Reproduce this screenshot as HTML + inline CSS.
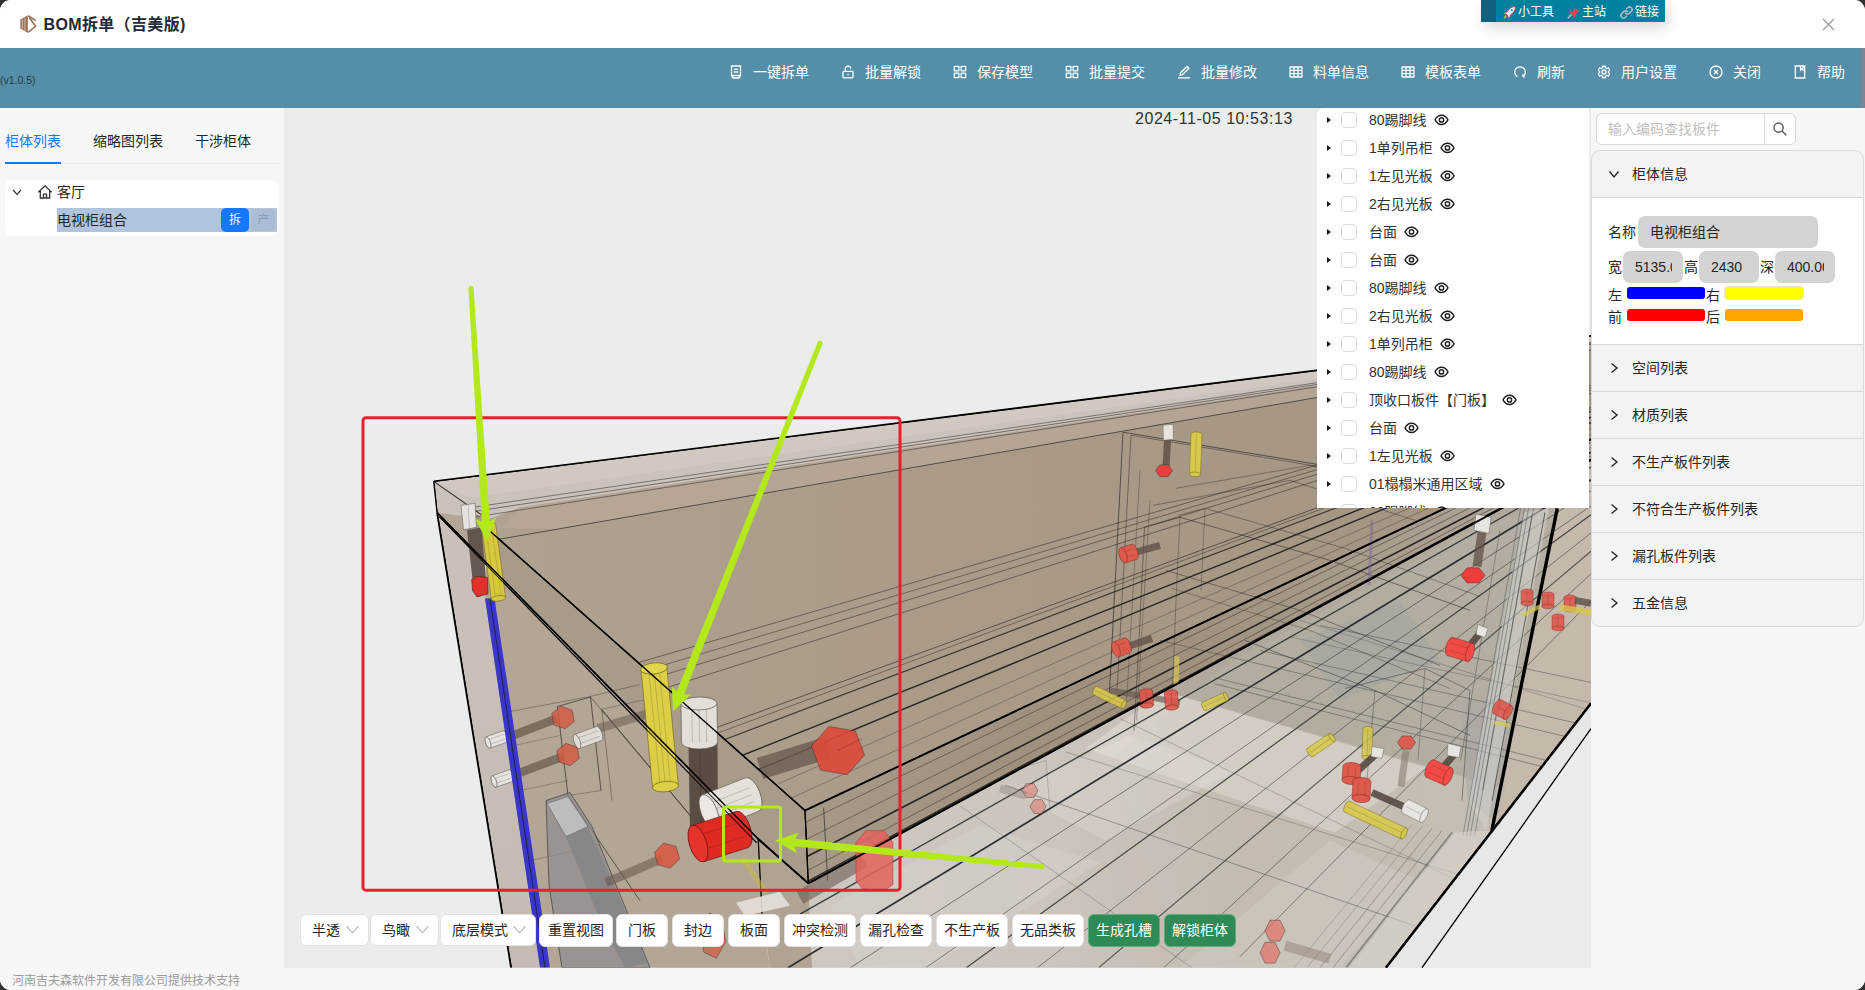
<!DOCTYPE html>
<html lang="zh-CN">
<head>
<meta charset="utf-8">
<title>BOM拆单（吉美版)</title>
<style>
*{box-sizing:border-box;margin:0;padding:0}
html,body{width:1865px;height:990px;overflow:hidden;background:#323232}
body{font-family:"Liberation Sans","Noto Sans CJK SC",sans-serif;font-size:14px;color:#262626;position:relative}
#win{position:absolute;left:0;top:0;width:1865px;height:990px;background:#f6f8f8;border-radius:11px;overflow:hidden}
.abs{position:absolute}
/* title bar */
#title{position:absolute;left:0;top:0;width:1865px;height:48px;background:#fff}
#title .t{position:absolute;left:43.5px;top:13px;letter-spacing:.35px;font-size:16px;font-weight:bold;color:#1f2937;line-height:24px;white-space:nowrap}
#float{position:absolute;left:1481px;top:0;width:184px;height:22px;background:#00809f;color:#fff;font-size:12px;line-height:21px;white-space:nowrap;box-shadow:3px 6px 14px rgba(0,0,0,.15)}
#float .strip{position:absolute;left:0;top:0;width:15px;height:22px;background:#12607f}
#float span{position:absolute;top:2px}
/* header */
#hdr{position:absolute;left:0;top:48px;width:1865px;height:60px;background:#548ea8}
#hdr .ver{position:absolute;left:0;top:26px;font-size:10.5px;color:#2a3b45;line-height:12px}
#hdr .sb{position:absolute;left:1861px;top:0;width:4px;height:61px;background:#7b8495}
.mi{position:absolute;top:14px;height:20px;line-height:20px;color:#fff;font-size:14px;white-space:nowrap}
.mi svg{position:absolute;left:0;top:3px;width:14px;height:14px;fill:none;stroke:#fff;stroke-width:1.3}
.mi b{font-weight:normal;position:absolute;left:24px;top:0}
/* left */
#left{position:absolute;left:0;top:108px;width:285px;height:860px;background:#f6f8f8}
.tab{position:absolute;top:22px;line-height:22px;font-size:14px;color:#262626;white-space:nowrap}
#tree{position:absolute;left:5px;top:72px;width:274px;height:56px;background:#fff;border-radius:7px}
/* viewport */
#vp{position:absolute;left:285px;top:108px;width:1306px;height:860px;background:#ebeded;overflow:hidden}
#ts{position:absolute;left:850px;top:0;font-size:16px;letter-spacing:.55px;line-height:21px;color:#333;white-space:nowrap}
/* list panel */
#lst{position:absolute;left:1032px;top:0;width:272px;height:400px;background:#fff;overflow:hidden;border-radius:7px 0 0 0}
.row{position:absolute;left:0;width:272px;height:28px;line-height:28px;font-size:14px;color:#333;white-space:nowrap}
.row i{position:absolute;left:10px;top:10.500px;width:0;height:0;border-left:4.500px solid #1a1a1a;border-top:3.700px solid transparent;border-bottom:3.700px solid transparent}
.row u{position:absolute;left:24px;top:6px;width:16px;height:16px;border:1px solid #d9d9d9;border-radius:4px;background:#fff}
.row s{position:absolute;left:52px;top:0;text-decoration:none}
.row s svg{display:inline-block;vertical-align:-2px;margin-left:7px;width:15px;height:15px}
/* toolbar */
.tb{position:absolute;top:806px;height:33px;line-height:31px;background:#fff;border:1px solid #e2e2e2;border-radius:6px;font-size:14px;color:#262626;text-align:center;white-space:nowrap}
.tb.g{background:#2e8b57;border-color:#5fae80;color:#fff}
.tb.sel{text-align:left;padding-left:11px;top:806px;height:32px;line-height:30px}
.tb.sel svg{position:absolute;right:9px;top:8px;width:13px;height:13px;fill:none;stroke:#bdbdbd;stroke-width:1.1}
/* right */
#right{position:absolute;left:1591px;top:108px;width:274px;height:860px;background:#f6f8f8}
#search{position:absolute;left:5px;top:5px;width:200px;height:32px;border:1px solid #d9d9d9;border-radius:6px;background:#fff}
#search .ph{position:absolute;left:11px;top:0;line-height:30px;color:#bfbfbf;font-size:14px;white-space:nowrap}
#search .btn{position:absolute;left:167px;top:0;width:1px;height:30px;background:#d9d9d9}
#col{position:absolute;left:0px;top:42px;width:273px;height:477px;border:1px solid #d9d9d9;border-radius:9px;background:#f2f4f4;overflow:hidden}
.ch{position:absolute;left:0;width:275px;height:47px;border-top:1px solid #d9d9d9;line-height:46px;font-size:14px;color:#262626}
.ch svg{position:absolute;left:16px;top:17px;width:12px;height:12px;fill:none;stroke:#262626;stroke-width:1.4}
.ch span{position:absolute;left:40px;top:0;white-space:nowrap}
#cc{position:absolute;left:0;top:46px;width:275px;height:147px;background:#fff;border-top:1px solid #d9d9d9}
.lb{position:absolute;font-size:14px;line-height:20px;color:#262626;white-space:nowrap}
.in{position:absolute;height:32px;border-radius:7px;background:#d3d3d3;line-height:32px;font-size:14px;color:#262626;padding:0 11px 0 12px;white-space:nowrap}
.in em{display:block;font-style:normal;overflow:hidden;width:100%;height:32px}
.bar{position:absolute;width:78px;height:12px;border-radius:3px}
#cc .lb,#cc .in,#cc .bar{transform:translate(1px,1px)}
/* footer */
#foot{position:absolute;left:0;top:968px;width:1865px;height:22px;background:#f7f7f7}
#foot span{position:absolute;left:12px;top:4.5px;font-size:12px;line-height:16px;color:#9a9a9a;white-space:nowrap}
</style>
</head>
<body>
<div id="win">

<div id="title">
  <svg class="abs" style="left:20px;top:15px" width="17" height="19" viewBox="0 0 17 19"><polygon points="7.900,0.200 0.300,4.400 0.300,13.600 7.900,17.900" fill="#a0765a"/><path d="M2.300 4.500V14.500M4.900 3V16" stroke="#cdb5a4" stroke-width="1" fill="none"/><path d="M8.200 0.800L15.800 5.400M9.200 2.500L15.600 11.300L8.200 17.200" stroke="#a0765a" stroke-width="1.700" fill="none" stroke-linejoin="bevel"/></svg>
  <div class="t">BOM拆单（吉美版)</div>
  <svg class="abs" style="left:1822px;top:18px" width="13" height="13" viewBox="0 0 13 13"><path d="M1 1L12 12M12 1L1 12" stroke="#999" stroke-width="1.15" fill="none"/></svg>
  <div id="float"><div class="strip"></div>
    <svg class="abs" style="left:22px;top:6px" width="13" height="13" viewBox="0 0 13 13"><path d="M12.5 .5C9 .5 6 2.5 4 6L2 6.5 1 8l2.5.3L5 10l.3 2.2L7 11l.3-2C10.5 7 12.5 4 12.5 .5Z" fill="#f4f4f6" stroke="#e6405c" stroke-width=".9"/><circle cx="8.8" cy="4.2" r="1.2" fill="#4aa3d8"/><path d="M3.3 9.7L1 12" stroke="#ffb02e" stroke-width="1.6"/></svg>
    <span style="left:37px">小工具</span>
    <svg class="abs" style="left:86px;top:6px" width="13" height="13" viewBox="0 0 13 13"><path d="M7.5 .8l4.7 4.7-1.4.6-2 2 .2 2.6-1.2 1.1L2.2 6.2l1.1-1.2 2.6.2 2-2z" fill="#e8404e"/><path d="M4.6 8.4L.8 12.2" stroke="#c9c9d2" stroke-width="1.3"/></svg>
    <span style="left:101px">主站</span>
    <svg class="abs" style="left:139px;top:6px" width="13" height="13" viewBox="0 0 13 13"><g fill="none" stroke="#aeb6c2" stroke-width="1.6" stroke-linecap="round"><path d="M5.6 7.4a2.6 2.6 0 0 0 3.7 0l2-2a2.6 2.6 0 0 0-3.7-3.7l-1 1"/><path d="M7.4 5.6a2.6 2.6 0 0 0-3.7 0l-2 2a2.6 2.6 0 0 0 3.7 3.7l1-1"/></g></svg>
    <span style="left:154px">链接</span>
  </div>
</div>

<div id="hdr">
  <div class="ver">(v1.0.5)</div>
  <div class="mi" style="left:729px"><svg viewBox="0 0 14 14"><path d="M2.5 1h9v9.5l-1.5 2.5h-6l-1.5-2.5zM2.5 10.5h9M4.8 4.3h4.4M4.8 7h4.4"/></svg><b>一键拆单</b></div>
  <div class="mi" style="left:841px"><svg viewBox="0 0 14 14"><rect x="2" y="6.3" width="10" height="6.5" rx=".8"/><path d="M4.3 6.3V3.8a2.7 2.7 0 0 1 5.4 0M7 8.8v1.6"/></svg><b>批量解锁</b></div>
  <div class="mi" style="left:953px"><svg viewBox="0 0 14 14"><rect x="1.3" y="1.3" width="4.6" height="4.6" rx=".6"/><rect x="8.1" y="1.3" width="4.6" height="4.6" rx=".6"/><rect x="1.3" y="8.1" width="4.6" height="4.6" rx=".6"/><rect x="8.1" y="8.1" width="4.6" height="4.6" rx=".6"/></svg><b>保存模型</b></div>
  <div class="mi" style="left:1065px"><svg viewBox="0 0 14 14"><rect x="1.3" y="1.3" width="4.6" height="4.6" rx=".6"/><rect x="8.1" y="1.3" width="4.6" height="4.6" rx=".6"/><rect x="1.3" y="8.1" width="4.6" height="4.6" rx=".6"/><rect x="8.1" y="8.1" width="4.6" height="4.6" rx=".6"/></svg><b>批量提交</b></div>
  <div class="mi" style="left:1177px"><svg viewBox="0 0 14 14"><path d="M3 10.2l.6-2.5L10 1.4l1.9 1.9-6.4 6.4zM1 12.9h12"/></svg><b>批量修改</b></div>
  <div class="mi" style="left:1289px"><svg viewBox="0 0 14 14"><rect x="1" y="2" width="12" height="10" rx=".6"/><path d="M1 5.3h12M1 8.7h12M5 2v10M9 2v10"/></svg><b>料单信息</b></div>
  <div class="mi" style="left:1401px"><svg viewBox="0 0 14 14"><rect x="1" y="2" width="12" height="10" rx=".6"/><path d="M1 5.3h12M1 8.7h12M5 2v10M9 2v10"/></svg><b>模板表单</b></div>
  <div class="mi" style="left:1513px"><svg viewBox="0 0 14 14"><path d="M4.2 11.6A5.3 5.3 0 1 1 9.8 11.6M9.8 11.6l.3-2.2M9.8 11.6l2 .6"/></svg><b>刷新</b></div>
  <div class="mi" style="left:1597px"><svg viewBox="0 0 14 14"><circle cx="7" cy="7" r="2"/><path d="M5.8 1.2h2.4l.4 1.7 1.3.7 1.6-.6 1.2 2.1-1.2 1.2v1.4l1.2 1.2-1.2 2.1-1.6-.6-1.3.7-.4 1.7H5.8l-.4-1.7-1.3-.7-1.6.6-1.2-2.1L2.5 7.7V6.3L1.300 5.100l1.200-2.100 1.600.6 1.300-.7z"/></svg><b>用户设置</b></div>
  <div class="mi" style="left:1709px"><svg viewBox="0 0 14 14"><circle cx="7" cy="7" r="6"/><path d="M5 5l4 4M9 5l-4 4"/></svg><b>关闭</b></div>
  <div class="mi" style="left:1793px"><svg viewBox="0 0 14 14"><path d="M2.3 1h9.4v12H2.300zM7.600 1v4l1.200-1 1.200 1V1"/></svg><b>帮助</b></div>
  <div class="sb"></div>
</div>

<div id="left">
  <div class="tab" style="left:5px;color:#1677ff">柜体列表</div>
  <div class="tab" style="left:93px">缩略图列表</div>
  <div class="tab" style="left:195px">干涉柜体</div>
  <div class="abs" style="left:5px;top:55px;width:274px;height:1px;background:#e9ebeb"></div>
  <div class="abs" style="left:5px;top:54px;width:56px;height:2px;background:#1677ff"></div>
  <div id="tree">
    <svg class="abs" style="left:7px;top:7px" width="10" height="10" viewBox="0 0 10 10"><path d="M1 3l4 4.300 4-4.300" fill="none" stroke="#333" stroke-width="1.2"/></svg>
    <svg class="abs" style="left:32px;top:4px" width="16" height="16" viewBox="0 0 16 16"><path d="M1.300 8.200L8 1.800l6.700 6.400M3.300 7v7h9.400V7M6.500 14v-3.800h3V14" fill="none" stroke="#333" stroke-width="1.3"/></svg>
    <div class="abs" style="left:52px;top:1px;line-height:22px;font-size:14px;color:#262626">客厅</div>
    <div class="abs" style="left:52px;top:28px;width:220px;height:24px;background:#b0c4de"></div>
    <div class="abs" style="left:52px;top:29px;line-height:22px;font-size:14px;color:#262626">电视柜组合</div>
    <div class="abs" style="left:216px;top:28px;width:28px;height:24px;border-radius:5px;background:#1677ff;color:#fff;font-size:12px;line-height:24px;text-align:center">拆</div>
    <div class="abs" style="left:245px;top:28px;width:27px;height:24px;border-radius:5px;background:#abbdd6;border:1px solid #b9c6d8;color:#8b9cb5;font-size:12px;line-height:22px;text-align:center">产</div>
  </div>
</div>

<div class="abs" style="left:284px;top:108px;width:1px;height:860px;background:#ebeded"></div>
<div id="vp">
<!--SCENE-->
<svg class="abs" style="left:0;top:0" width="1306" height="860" preserveAspectRatio="none" viewBox="285 108 1306 859.300">
<defs>
<linearGradient id="gTop" x1="488" y1="0" x2="1591" y2="0" gradientUnits="userSpaceOnUse"><stop offset="0" stop-color="#b0a290"/><stop offset=".35" stop-color="#ab9c8a"/><stop offset="1" stop-color="#a39381"/></linearGradient>
<linearGradient id="gFloor" x1="820" y1="0" x2="1591" y2="0" gradientUnits="userSpaceOnUse"><stop offset="0" stop-color="#cfc8c1"/><stop offset=".3" stop-color="#ccc5bd"/><stop offset=".55" stop-color="#c3baad"/><stop offset="1" stop-color="#c6bdb0"/></linearGradient>
<linearGradient id="gLeft" x1="440" y1="500" x2="540" y2="967" gradientUnits="userSpaceOnUse"><stop offset="0" stop-color="#cac2ba"/><stop offset="1" stop-color="#c4bbb3"/></linearGradient>
<linearGradient id="gBand" x1="805" y1="0" x2="1591" y2="0" gradientUnits="userSpaceOnUse"><stop offset="0" stop-color="#a79988"/><stop offset=".28" stop-color="#a0917f"/><stop offset=".5" stop-color="#a0917f"/><stop offset=".72" stop-color="#a89c8d"/><stop offset="1" stop-color="#b0a598"/></linearGradient>
</defs>
<polygon points="433.7,481.0 488.0,519.0 485.0,600.0 532.0,913.0 540.0,967.0 511.0,967.0 437.0,512.3" fill="url(#gLeft)"/>
<polygon points="437.0,512.3 758.2,838.4 762.0,913.0 770.0,967.0 540.0,967.0 532.0,913.0 485.0,600.0 488.0,519.0" fill="#b3a697"/>
<polygon points="470.0,545.8 470.0,512.0 488.0,519.0 487.9,529.0 805.0,810.0 808.3,882.8 758.2,838.4" fill="#a99b8a"/>
<polygon points="433.7,481.0 1591.0,335.6 1591.0,343.6 520.0,507.0 488.0,519.0" fill="#cbc3b9"/>
<polygon points="488.0,519.0 520.0,507.0 1591.0,343.6 1591.0,439.1 805.0,810.0 487.9,529.0" fill="url(#gTop)"/>
<polygon points="520.0,507.0 1591.0,343.6 1591.0,349.8 560.0,528.4 500.0,528.0" fill="#b6a898" fill-opacity="0.8"/>
<polygon points="433.7,481.0 1591.0,335.6 1591.0,340.0 470.0,497.4" fill="#d3ccc4" fill-opacity="0.7"/>
<polygon points="805.0,810.0 1591.0,439.1 1591.0,459.6 808.3,882.8" fill="url(#gBand)"/>
<polygon points="808.3,882.8 1591.0,459.6 1591.0,703.0 1386.0,967.0 770.0,967.0 762.0,913.0 758.2,838.4" fill="url(#gFloor)"/>
<polygon points="1591.0,703.0 1591.0,728.0 1422.0,967.0 1386.0,967.0" fill="#e7e7e6"/>
<polygon points="758.2,838.4 808.3,882.8 812.0,967.0 770.0,967.0 762.0,913.0" fill="#b0a394"/>
<polygon points="830.0,905.0 980.0,825.0 1100.0,862.0 930.0,967.0 860.0,967.0" fill="#d6d0ca" fill-opacity="0.55"/>
<polygon points="1010.0,790.0 1130.0,735.0 1235.0,770.0 1105.0,840.0" fill="#d9d3cd" fill-opacity="0.5"/>
<polygon points="1180.0,967.0 1330.0,840.0 1420.0,880.0 1340.0,967.0" fill="#d2cbc4" fill-opacity="0.5"/>
<polygon points="1163.7,690.7 1543.0,485.6 1557.3,508.0 1500.5,787.0" fill="#7f786d" fill-opacity="0.28"/>
<polygon points="1163.7,690.7 1426.0,767.0 1335.0,832.0 1085.0,748.0" fill="#ece8e3" fill-opacity="0.42"/>
<polygon points="1230.0,662.0 1490.0,520.0 1557.0,508.0 1491.0,830.0 1386.0,967.0 1180.0,967.0 1110.0,760.0" fill="#c9c6c2" fill-opacity="0.15"/>
<polygon points="1300.0,640.0 1400.0,600.0 1440.0,660.0 1340.0,700.0" fill="#9aa0a4" fill-opacity="0.35"/>
<polygon points="1462.0,700.0 1517.0,700.0 1500.0,825.0 1467.0,800.0" fill="#a9a8a6" fill-opacity="0.55"/>
<polygon points="1557.3,508.0 1591.0,470.0 1591.0,703.0 1491.7,830.5" fill="#c3b8a9" fill-opacity="0.75"/>
<clipPath id="cab"><polygon points="433.7,481.0 1591.0,335.6 1591.0,703.0 1386.0,967.0 511.0,967.0 437.0,512.3"/></clipPath><g clip-path="url(#cab)">
<line x1="464.5" y1="508.2" x2="1591.0" y2="342.1" stroke="#1c1c1c" stroke-width="0.8" stroke-opacity="0.6"/>
<line x1="468.6" y1="511.9" x2="1591.0" y2="343.0" stroke="#1c1c1c" stroke-width="0.8" stroke-opacity="0.65"/>
<line x1="474.1" y1="516.8" x2="1591.0" y2="344.2" stroke="#1c1c1c" stroke-width="0.8" stroke-opacity="0.6"/>
<line x1="499.1" y1="538.9" x2="1591.0" y2="349.8" stroke="#1c1c1c" stroke-width="0.9" stroke-opacity="0.7"/>
<line x1="638.2" y1="662.2" x2="1591.0" y2="385.0" stroke="#1c1c1c" stroke-width="0.8" stroke-opacity="0.6"/>
<line x1="646.7" y1="669.7" x2="1591.0" y2="387.4" stroke="#1c1c1c" stroke-width="0.8" stroke-opacity="0.55"/>
<line x1="655.1" y1="677.2" x2="1591.0" y2="389.8" stroke="#1c1c1c" stroke-width="0.8" stroke-opacity="0.6"/>
<line x1="666.5" y1="687.3" x2="1591.0" y2="393.1" stroke="#1c1c1c" stroke-width="0.8" stroke-opacity="0.6"/>
<line x1="712.9" y1="728.4" x2="1591.0" y2="407.3" stroke="#1c1c1c" stroke-width="0.9" stroke-opacity="0.65"/>
<line x1="717.7" y1="732.6" x2="1591.0" y2="408.8" stroke="#1c1c1c" stroke-width="0.8" stroke-opacity="0.55"/>
<line x1="724.8" y1="738.9" x2="1591.0" y2="411.1" stroke="#1c1c1c" stroke-width="1.1" stroke-opacity="0.8"/>
<line x1="742.6" y1="754.7" x2="1591.0" y2="417.0" stroke="#1c1c1c" stroke-width="1.4" stroke-opacity="0.9"/>
<line x1="758.6" y1="768.9" x2="1591.0" y2="422.4" stroke="#1c1c1c" stroke-width="1.4" stroke-opacity="0.9"/>
<line x1="775.9" y1="784.2" x2="1591.0" y2="428.5" stroke="#1c1c1c" stroke-width="0.7" stroke-opacity="0.45"/>
<line x1="791.0" y1="797.6" x2="1591.0" y2="433.9" stroke="#1c1c1c" stroke-width="0.7" stroke-opacity="0.45"/>
<line x1="805.5" y1="821.6" x2="1591.0" y2="442.4" stroke="#1c1c1c" stroke-width="0.8" stroke-opacity="0.55"/>
<line x1="806.3" y1="838.8" x2="1591.0" y2="447.2" stroke="#1c1c1c" stroke-width="0.8" stroke-opacity="0.55"/>
<line x1="807.1" y1="855.9" x2="1591.0" y2="452.0" stroke="#1c1c1c" stroke-width="1.6" stroke-opacity="0.95"/>
<line x1="807.7" y1="869.8" x2="1591.0" y2="456.0" stroke="#1c1c1c" stroke-width="0.8" stroke-opacity="0.55"/>
<line x1="808.2" y1="880.4" x2="1591.0" y2="459.0" stroke="#1c1c1c" stroke-width="1.4" stroke-opacity="0.9"/>
<line x1="800.0" y1="913.5" x2="1591.0" y2="466.8" stroke="#20262a" stroke-width="1.3" stroke-opacity="0.85"/>
<line x1="788.0" y1="967.0" x2="1591.0" y2="479.5" stroke="#20262a" stroke-width="1.7" stroke-opacity="0.95"/>
<line x1="850.3" y1="967.0" x2="1591.0" y2="490.4" stroke="#20262a" stroke-width="0.9" stroke-opacity="0.6"/>
<line x1="925.9" y1="967.0" x2="1591.0" y2="505.5" stroke="#20262a" stroke-width="0.9" stroke-opacity="0.55"/>
<line x1="966.3" y1="967.0" x2="1591.0" y2="514.5" stroke="#20262a" stroke-width="1.2" stroke-opacity="0.8"/>
<line x1="1037.6" y1="967.0" x2="1591.0" y2="532.7" stroke="#20262a" stroke-width="0.9" stroke-opacity="0.55"/>
<line x1="1098.7" y1="967.0" x2="1591.0" y2="550.8" stroke="#20262a" stroke-width="1.1" stroke-opacity="0.7"/>
<line x1="1163.8" y1="967.0" x2="1591.0" y2="573.4" stroke="#20262a" stroke-width="0.9" stroke-opacity="0.55"/>
<line x1="1240.0" y1="955.9" x2="1591.0" y2="600.6" stroke="#20262a" stroke-width="0.9" stroke-opacity="0.55"/>
<line x1="960.0" y1="805.3" x2="1191.7" y2="967.0" stroke="#3a3f42" stroke-width="0.7" stroke-opacity="0.4"/>
<line x1="1120.0" y1="718.0" x2="1591.0" y2="943.9" stroke="#3a3f42" stroke-width="0.7" stroke-opacity="0.4"/>
<line x1="1300.0" y1="619.8" x2="1591.0" y2="710.2" stroke="#3a3f42" stroke-width="0.7" stroke-opacity="0.4"/>
<line x1="1004.8" y1="784.6" x2="1591.0" y2="985.6" stroke="#30373b" stroke-width="0.8" stroke-opacity="0.5"/>
<line x1="1066.0" y1="751.5" x2="1591.0" y2="915.4" stroke="#30373b" stroke-width="0.7" stroke-opacity="0.4"/>
<line x1="1214.5" y1="677.2" x2="1591.0" y2="771.0" stroke="#30373b" stroke-width="0.8" stroke-opacity="0.5"/>
<line x1="1290.0" y1="636.4" x2="1591.0" y2="702.4" stroke="#30373b" stroke-width="0.7" stroke-opacity="0.4"/>
<line x1="1214.5" y1="683.3" x2="1591.0" y2="778.3" stroke="#30373b" stroke-width="0.8" stroke-opacity="0.5"/>
<line x1="1160.0" y1="640.0" x2="1591.0" y2="742.0" stroke="#30373b" stroke-width="0.8" stroke-opacity="0.5"/>
<line x1="1260.0" y1="650.0" x2="1591.0" y2="726.0" stroke="#30373b" stroke-width="0.8" stroke-opacity="0.5"/>
<line x1="1320.0" y1="625.0" x2="1591.0" y2="682.0" stroke="#30373b" stroke-width="0.8" stroke-opacity="0.5"/>
<line x1="1123.0" y1="432.0" x2="1480.8" y2="491.1" stroke="#222" stroke-width="0.9" stroke-opacity="0.7"/>
<line x1="1131.0" y1="435.0" x2="1477.2" y2="492.8" stroke="#222" stroke-width="0.8" stroke-opacity="0.55"/>
<line x1="1123.0" y1="432.0" x2="1109.0" y2="700.0" stroke="#222" stroke-width="0.9" stroke-opacity="0.7"/>
<line x1="1131.0" y1="435.0" x2="1117.1" y2="690.0" stroke="#222" stroke-width="0.8" stroke-opacity="0.55"/>
<line x1="1140.0" y1="470.0" x2="1126.7" y2="700.0" stroke="#222" stroke-width="0.7" stroke-opacity="0.45"/>
<line x1="1150.0" y1="500.0" x2="1136.5" y2="720.0" stroke="#222" stroke-width="0.7" stroke-opacity="0.45"/>
<polyline points="1153.0,505.0 1290.0,480.0 1415.0,520.0" fill="none" stroke="#222" stroke-width="0.8" stroke-opacity="0.5" stroke-linejoin="round"/>
<polyline points="1176.0,488.0 1310.0,465.0 1420.0,500.0" fill="none" stroke="#222" stroke-width="0.8" stroke-opacity="0.45" stroke-linejoin="round"/>
<polyline points="1144.5,527.0 1180.0,517.0 1330.0,560.0 1470.0,610.0" fill="none" stroke="#2a2622" stroke-width="0.9" stroke-opacity="0.6" stroke-linejoin="round"/>
<polyline points="1144.5,527.0 1139.0,640.0 1134.0,730.0" fill="none" stroke="#2a2622" stroke-width="0.9" stroke-opacity="0.55" stroke-linejoin="round"/>
<polyline points="1180.0,517.0 1176.0,600.0 1172.0,700.0" fill="none" stroke="#2a2622" stroke-width="0.8" stroke-opacity="0.45" stroke-linejoin="round"/>
<polyline points="1178.0,515.0 1205.0,508.0 1345.0,548.0 1480.0,596.0" fill="none" stroke="#2a2622" stroke-width="0.8" stroke-opacity="0.5" stroke-linejoin="round"/>
<polyline points="1205.0,508.0 1201.0,590.0" fill="none" stroke="#2a2622" stroke-width="0.8" stroke-opacity="0.4" stroke-linejoin="round"/>
<polyline points="1166.0,570.0 1300.0,610.0 1440.0,665.0" fill="none" stroke="#2a2622" stroke-width="0.9" stroke-opacity="0.5" stroke-linejoin="round"/>
<polyline points="1172.0,588.0 1310.0,630.0 1450.0,688.0" fill="none" stroke="#2a2622" stroke-width="0.8" stroke-opacity="0.45" stroke-linejoin="round"/>
<polyline points="1245.0,640.0 1375.0,690.0 1470.0,735.0" fill="none" stroke="#30373b" stroke-width="0.9" stroke-opacity="0.6" stroke-linejoin="round"/>
<polyline points="1375.0,690.0 1366.0,790.0" fill="none" stroke="#30373b" stroke-width="0.8" stroke-opacity="0.5" stroke-linejoin="round"/>
<polyline points="1345.0,688.0 1425.0,668.0 1470.0,690.0 1462.0,800.0" fill="none" stroke="#30373b" stroke-width="0.9" stroke-opacity="0.55" stroke-linejoin="round"/>
<polyline points="1425.0,668.0 1418.0,760.0" fill="none" stroke="#30373b" stroke-width="0.8" stroke-opacity="0.45" stroke-linejoin="round"/>
<polygon points="1524.0,512.0 1549.0,508.0 1486.0,830.0 1468.0,800.0" fill="#d6d3cf" fill-opacity="0.55"/>
<line x1="1522.0" y1="500.0" x2="1463.0" y2="835.0" stroke="#5f686c" stroke-width="1.1" stroke-opacity="0.55"/>
<line x1="1526.0" y1="500.0" x2="1466.6" y2="835.0" stroke="#5f686c" stroke-width="1.1" stroke-opacity="0.6"/>
<line x1="1530.0" y1="500.0" x2="1470.2" y2="835.0" stroke="#5f686c" stroke-width="1.1" stroke-opacity="0.55"/>
<line x1="1535.0" y1="500.0" x2="1474.7" y2="835.0" stroke="#5f686c" stroke-width="1.1" stroke-opacity="0.5"/>
<line x1="1557.3" y1="508.0" x2="1491.7" y2="830.5" stroke="#000" stroke-width="3.4"/>
<line x1="1545.0" y1="512.0" x2="1492.1" y2="800.0" stroke="#222" stroke-width="1" stroke-opacity="0.6"/>
<line x1="1532.0" y1="515.0" x2="1482.5" y2="790.0" stroke="#333" stroke-width="0.9" stroke-opacity="0.5"/>
<line x1="1500.0" y1="530.0" x2="1460.7" y2="760.0" stroke="#333" stroke-width="0.8" stroke-opacity="0.45"/>
<line x1="1452.0" y1="832.0" x2="1346.0" y2="967.0" stroke="#555b5e" stroke-width="1.6" stroke-opacity="0.6"/>
<line x1="1442.0" y1="830.0" x2="1333.0" y2="967.0" stroke="#555b5e" stroke-width="0.9" stroke-opacity="0.5"/>
<line x1="1432.0" y1="828.0" x2="1320.0" y2="967.0" stroke="#555b5e" stroke-width="0.9" stroke-opacity="0.5"/>
<line x1="1422.0" y1="826.0" x2="1307.0" y2="967.0" stroke="#555b5e" stroke-width="0.8" stroke-opacity="0.4"/>
<line x1="1412.0" y1="824.0" x2="1294.0" y2="967.0" stroke="#555b5e" stroke-width="0.8" stroke-opacity="0.35"/>
<polygon points="1491.0,830.0 1455.0,832.0 1349.0,967.0 1386.0,967.0" fill="#d9d4ce" fill-opacity="0.6"/>
<line x1="433.7" y1="481.0" x2="1591.0" y2="335.6" stroke="#000" stroke-width="1.6"/>
<line x1="805.0" y1="810.0" x2="1591.0" y2="439.1" stroke="#000" stroke-width="1.7" stroke-opacity="0.95"/>
<line x1="808.3" y1="882.8" x2="1591.0" y2="459.6" stroke="#000" stroke-width="1.9" stroke-opacity="0.95"/>
<line x1="433.7" y1="481.0" x2="437.0" y2="512.3" stroke="#000" stroke-width="1.3"/>
<line x1="433.7" y1="481.0" x2="488.0" y2="519.0" stroke="#000" stroke-width="1" stroke-opacity="0.8"/>
<line x1="437.0" y1="512.3" x2="511.0" y2="967.0" stroke="#000" stroke-width="1.7"/>
<polyline points="437.0,512.3 758.2,838.4" fill="none" stroke="#000" stroke-width="1.5" stroke-linejoin="round"/>
<line x1="439.5" y1="516.5" x2="756.5" y2="842.0" stroke="#000" stroke-width="1" stroke-opacity="0.85"/>
<polyline points="487.9,529.0 805.0,810.0" fill="none" stroke="#000" stroke-width="1.4" stroke-linejoin="round"/>
<line x1="805.0" y1="810.0" x2="808.3" y2="882.8" stroke="#000" stroke-width="1.2"/>
<line x1="758.2" y1="838.4" x2="808.3" y2="882.8" stroke="#000" stroke-width="1.7"/>
<line x1="758.2" y1="838.4" x2="762.0" y2="913.0" stroke="#000" stroke-width="1.3"/>
<line x1="823.6" y1="807.0" x2="827.7" y2="880.0" stroke="#222" stroke-width="0.9" stroke-opacity="0.7"/>
<line x1="1591.0" y1="703.0" x2="1386.0" y2="967.0" stroke="#000" stroke-width="2.4"/>
<line x1="1591.0" y1="728.0" x2="1422.0" y2="967.0" stroke="#000" stroke-width="1.3"/>
<polyline points="557.4,706.0 590.5,696.5 601.0,790.0" fill="none" stroke="#2b2622" stroke-width="0.9" stroke-opacity="0.75" stroke-linejoin="round"/>
<polyline points="557.4,706.0 568.0,795.0 640.0,900.0" fill="none" stroke="#2b2622" stroke-width="0.9" stroke-opacity="0.75" stroke-linejoin="round"/>
<line x1="601.8" y1="709.0" x2="702.0" y2="829.0" stroke="#2b2622" stroke-width="0.9" stroke-opacity="0.75"/>
<line x1="590.5" y1="696.5" x2="690.0" y2="815.0" stroke="#2b2622" stroke-width="0.8" stroke-opacity="0.6"/>
<line x1="601.8" y1="709.0" x2="612.0" y2="800.0" stroke="#2b2622" stroke-width="0.8" stroke-opacity="0.5"/>
<line x1="568.0" y1="795.0" x2="601.0" y2="790.0" stroke="#2b2622" stroke-width="0.7" stroke-opacity="0.45"/>
<line x1="510.0" y1="711.0" x2="590.0" y2="696.0" stroke="#2b2622" stroke-width="0.7" stroke-opacity="0.5"/>
<line x1="514.0" y1="745.0" x2="560.0" y2="735.0" stroke="#2b2622" stroke-width="0.7" stroke-opacity="0.4"/>
<line x1="520.0" y1="790.0" x2="568.0" y2="780.0" stroke="#2b2622" stroke-width="0.7" stroke-opacity="0.4"/>
<line x1="530.0" y1="860.0" x2="575.0" y2="850.0" stroke="#2b2622" stroke-width="0.7" stroke-opacity="0.4"/>
<line x1="590.0" y1="696.0" x2="640.0" y2="684.0" stroke="#2b2622" stroke-width="0.7" stroke-opacity="0.5"/>
<line x1="601.0" y1="709.0" x2="650.0" y2="698.0" stroke="#2b2622" stroke-width="0.7" stroke-opacity="0.45"/>
<line x1="510.0" y1="736.0" x2="557.0" y2="718.0" stroke="#6a5b4f" stroke-width="8.5" stroke-opacity="0.75"/>
<line x1="515.0" y1="774.0" x2="563.0" y2="756.0" stroke="#6a5b4f" stroke-width="8.5" stroke-opacity="0.75"/>
<line x1="598.0" y1="728.0" x2="652.0" y2="712.0" stroke="#6a5b4f" stroke-width="9" stroke-opacity="0.55"/>
<ellipse cx="505.0" cy="736.0" rx="2.4" ry="6.0" transform="rotate(160.6 505.0 736.0)" fill="#e8e3de" stroke="#555" stroke-width="0.6"/>
<polygon points="503.0,730.3 486.0,736.3 490.0,747.7 507.0,741.7" fill="#e8e3de"/>
<line x1="503.0" y1="730.3" x2="486.0" y2="736.3" stroke="#555" stroke-width="0.6" stroke-opacity="0.9"/>
<line x1="507.0" y1="741.7" x2="490.0" y2="747.7" stroke="#555" stroke-width="0.6" stroke-opacity="0.9"/>
<line x1="505.8" y1="738.3" x2="488.8" y2="744.3" stroke="#555" stroke-width="0.5" stroke-opacity="0.55"/>
<line x1="504.2" y1="733.7" x2="487.2" y2="739.7" stroke="#555" stroke-width="0.5" stroke-opacity="0.55"/>
<ellipse cx="488.0" cy="742.0" rx="2.4" ry="6.0" transform="rotate(160.6 488.0 742.0)" fill="#e8e3de" stroke="#555" stroke-width="0.6"/>
<ellipse cx="511.0" cy="775.0" rx="2.4" ry="6.0" transform="rotate(160.6 511.0 775.0)" fill="#e8e3de" stroke="#555" stroke-width="0.6"/>
<polygon points="509.0,769.3 492.0,775.3 496.0,786.7 513.0,780.7" fill="#e8e3de"/>
<line x1="509.0" y1="769.3" x2="492.0" y2="775.3" stroke="#555" stroke-width="0.6" stroke-opacity="0.9"/>
<line x1="513.0" y1="780.7" x2="496.0" y2="786.7" stroke="#555" stroke-width="0.6" stroke-opacity="0.9"/>
<line x1="511.8" y1="777.3" x2="494.8" y2="783.3" stroke="#555" stroke-width="0.5" stroke-opacity="0.55"/>
<line x1="510.2" y1="772.7" x2="493.2" y2="778.7" stroke="#555" stroke-width="0.5" stroke-opacity="0.55"/>
<ellipse cx="494.0" cy="781.0" rx="2.4" ry="6.0" transform="rotate(160.6 494.0 781.0)" fill="#e8e3de" stroke="#555" stroke-width="0.6"/>
<polygon points="485.0,598.0 494.5,598.0 542.0,913.0 550.0,967.0 540.0,967.0 532.0,913.0" fill="#3a36c8"/>
<line x1="490.0" y1="598.0" x2="545.0" y2="967.0" stroke="#111" stroke-width="0.8" stroke-opacity="0.8"/>
<polygon points="574.3,720.9 565.1,728.2 553.8,724.3 551.7,713.1 560.9,705.8 572.2,709.7" fill="#d4563e" fill-opacity="0.8" stroke="#3a2a2a" stroke-width="0.6" stroke-opacity="0.7" stroke-linejoin="round"/>
<polygon points="579.3,757.9 570.1,765.2 558.8,761.3 556.7,750.1 565.9,742.8 577.2,746.7" fill="#d4563e" fill-opacity="0.8" stroke="#3a2a2a" stroke-width="0.6" stroke-opacity="0.7" stroke-linejoin="round"/>
<ellipse cx="599.0" cy="733.0" rx="3.0" ry="7.5" transform="rotate(160.0 599.0 733.0)" fill="#e3ddd6" fill-opacity="0.95" stroke="#555" stroke-width="0.6"/>
<polygon points="596.4,726.0 574.4,734.0 579.6,748.0 601.6,740.0" fill="#e3ddd6" fill-opacity="0.95"/>
<line x1="596.4" y1="726.0" x2="574.4" y2="734.0" stroke="#555" stroke-width="0.6" stroke-opacity="0.9"/>
<line x1="601.6" y1="740.0" x2="579.6" y2="748.0" stroke="#555" stroke-width="0.6" stroke-opacity="0.9"/>
<line x1="600.0" y1="735.8" x2="578.0" y2="743.8" stroke="#555" stroke-width="0.5" stroke-opacity="0.55"/>
<line x1="598.0" y1="730.2" x2="576.0" y2="738.2" stroke="#555" stroke-width="0.5" stroke-opacity="0.55"/>
<ellipse cx="577.0" cy="741.0" rx="3.0" ry="7.5" transform="rotate(160.0 577.0 741.0)" fill="#e3ddd6" fill-opacity="0.95" stroke="#555" stroke-width="0.6"/>
<polygon points="546.0,800.0 570.0,792.0 592.0,826.0 650.0,967.0 562.0,967.0 549.0,885.0" fill="#8c8c8f" fill-opacity="0.68" stroke="#333" stroke-width="0.8" stroke-opacity="0.8" stroke-linejoin="round"/>
<polygon points="547.0,803.0 568.0,796.0 588.0,826.0 566.0,836.0" fill="#c4c4c6" fill-opacity="0.85" stroke="#444" stroke-width="0.6" stroke-opacity="0.7" stroke-linejoin="round"/>
<polygon points="566.0,836.0 588.0,826.0 648.0,962.0 625.0,967.0 600.0,920.0" fill="#7c7d82" fill-opacity="0.6"/>
<polygon points="461.0,505.0 475.0,503.0 476.5,527.0 463.5,529.5" fill="#e7e2dd" stroke="#666" stroke-width="0.6" stroke-linejoin="round"/>
<line x1="468.0" y1="504.0" x2="469.5" y2="528.0" stroke="#777" stroke-width="0.5" stroke-opacity="0.7"/>
<polygon points="467.0,530.0 481.5,527.0 486.0,580.0 473.0,583.0" fill="#5d5048" fill-opacity="0.92"/>
<polygon points="471.7,579.0 477.0,576.0 487.5,577.0 488.0,593.5 477.0,596.5 472.5,590.0" fill="#e0302a" stroke="#5a1512" stroke-width="0.6" stroke-linejoin="round"/>
<ellipse cx="488.5" cy="525.0" rx="2.7" ry="7.2" transform="rotate(82.2 488.5 525.0)" fill="#d8c83e" stroke="#6f651c" stroke-width="0.6"/>
<polygon points="481.4,526.0 491.4,599.0 505.6,597.0 495.6,524.0" fill="#d8c83e"/>
<line x1="481.4" y1="526.0" x2="491.4" y2="599.0" stroke="#6f651c" stroke-width="0.6" stroke-opacity="0.9"/>
<line x1="495.6" y1="524.0" x2="505.6" y2="597.0" stroke="#6f651c" stroke-width="0.6" stroke-opacity="0.9"/>
<line x1="491.4" y1="524.6" x2="501.4" y2="597.6" stroke="#6f651c" stroke-width="0.5" stroke-opacity="0.55"/>
<line x1="485.6" y1="525.4" x2="495.6" y2="598.4" stroke="#6f651c" stroke-width="0.5" stroke-opacity="0.55"/>
<ellipse cx="498.5" cy="598.0" rx="2.7" ry="7.2" transform="rotate(82.2 498.5 598.0)" fill="#d8c83e" stroke="#6f651c" stroke-width="0.6"/>
<ellipse cx="654.0" cy="669.0" rx="5.2" ry="13.0" transform="rotate(84.4 654.0 669.0)" fill="#ddce45" stroke="#6f651c" stroke-width="0.7"/>
<polygon points="641.1,670.3 652.6,787.3 678.4,784.7 666.9,667.7" fill="#ddce45"/>
<line x1="641.1" y1="670.3" x2="652.6" y2="787.3" stroke="#6f651c" stroke-width="0.7" stroke-opacity="0.9"/>
<line x1="666.9" y1="667.7" x2="678.4" y2="784.7" stroke="#6f651c" stroke-width="0.7" stroke-opacity="0.9"/>
<line x1="659.2" y1="668.5" x2="670.7" y2="785.5" stroke="#6f651c" stroke-width="0.5" stroke-opacity="0.55"/>
<line x1="654.0" y1="669.0" x2="665.5" y2="786.0" stroke="#6f651c" stroke-width="0.5" stroke-opacity="0.55"/>
<line x1="648.8" y1="669.5" x2="660.3" y2="786.5" stroke="#6f651c" stroke-width="0.5" stroke-opacity="0.55"/>
<ellipse cx="665.5" cy="786.0" rx="5.2" ry="13.0" transform="rotate(84.4 665.5 786.0)" fill="#ddce45" stroke="#6f651c" stroke-width="0.7"/>
<ellipse cx="654.0" cy="668.0" rx="13.5" ry="5.5" transform="rotate(-6.0 654.0 668.0)" fill="#e2d44c" stroke="#6f651c" stroke-width="0.7"/>
<polygon points="688.5,743.0 717.5,742.0 718.0,829.0 690.0,831.0" fill="#55483e" fill-opacity="0.95"/>
<line x1="700.0" y1="744.0" x2="701.0" y2="830.0" stroke="#2a221d" stroke-width="0.5" stroke-opacity="0.6"/>
<ellipse cx="699.5" cy="742.0" rx="6.5" ry="18.0" transform="rotate(-90.7 699.5 742.0)" fill="#e4ded8" stroke="#555" stroke-width="0.7"/>
<polygon points="717.5,741.8 717.0,702.8 681.0,703.2 681.5,742.2" fill="#e4ded8"/>
<line x1="717.5" y1="741.8" x2="717.0" y2="702.8" stroke="#555" stroke-width="0.7" stroke-opacity="0.9"/>
<line x1="681.5" y1="742.2" x2="681.0" y2="703.2" stroke="#555" stroke-width="0.7" stroke-opacity="0.9"/>
<line x1="692.3" y1="742.1" x2="691.8" y2="703.1" stroke="#555" stroke-width="0.5" stroke-opacity="0.55"/>
<line x1="699.5" y1="742.0" x2="699.0" y2="703.0" stroke="#555" stroke-width="0.5" stroke-opacity="0.55"/>
<line x1="706.7" y1="741.9" x2="706.2" y2="702.9" stroke="#555" stroke-width="0.5" stroke-opacity="0.55"/>
<ellipse cx="699.0" cy="703.0" rx="6.5" ry="18.0" transform="rotate(-90.7 699.0 703.0)" fill="#e4ded8" stroke="#555" stroke-width="0.7"/>
<ellipse cx="752.0" cy="794.0" rx="8.1" ry="18.0" transform="rotate(158.4 752.0 794.0)" fill="#e6e0da" stroke="#555" stroke-width="0.7"/>
<polygon points="745.4,777.3 702.4,794.3 715.6,827.7 758.6,810.7" fill="#e6e0da"/>
<line x1="745.4" y1="777.3" x2="702.4" y2="794.3" stroke="#555" stroke-width="0.7" stroke-opacity="0.9"/>
<line x1="758.6" y1="810.7" x2="715.6" y2="827.7" stroke="#555" stroke-width="0.7" stroke-opacity="0.9"/>
<line x1="754.6" y1="800.7" x2="711.6" y2="817.7" stroke="#555" stroke-width="0.5" stroke-opacity="0.55"/>
<line x1="752.0" y1="794.0" x2="709.0" y2="811.0" stroke="#555" stroke-width="0.5" stroke-opacity="0.55"/>
<line x1="749.4" y1="787.3" x2="706.4" y2="804.3" stroke="#555" stroke-width="0.5" stroke-opacity="0.55"/>
<ellipse cx="709.0" cy="811.0" rx="8.1" ry="18.0" transform="rotate(158.4 709.0 811.0)" fill="#ece7e2" stroke="#555" stroke-width="0.7"/>
<ellipse cx="742.0" cy="829.0" rx="8.6" ry="19.0" transform="rotate(162.3 742.0 829.0)" fill="#df2a24" stroke="#5a1512" stroke-width="0.7"/>
<polygon points="736.2,810.9 692.2,824.9 703.8,861.1 747.8,847.1" fill="#df2a24"/>
<line x1="736.2" y1="810.9" x2="692.2" y2="824.9" stroke="#5a1512" stroke-width="0.7" stroke-opacity="0.9"/>
<line x1="747.8" y1="847.1" x2="703.8" y2="861.1" stroke="#5a1512" stroke-width="0.7" stroke-opacity="0.9"/>
<line x1="744.3" y1="836.2" x2="700.3" y2="850.2" stroke="#5a1512" stroke-width="0.5" stroke-opacity="0.55"/>
<line x1="739.7" y1="821.8" x2="695.7" y2="835.8" stroke="#5a1512" stroke-width="0.5" stroke-opacity="0.55"/>
<ellipse cx="698.0" cy="843.0" rx="8.6" ry="19.0" transform="rotate(162.3 698.0 843.0)" fill="#e6332c" stroke="#5a1512" stroke-width="0.7"/>
<line x1="760.0" y1="768.0" x2="828.0" y2="747.0" stroke="#6a5c51" stroke-width="22" stroke-opacity="0.8"/>
<polygon points="864.6,754.5 847.2,774.1 820.6,769.6 811.4,745.5 828.8,725.9 855.4,730.4" fill="#db4a3a" fill-opacity="0.92" stroke="#3a2a2a" stroke-width="0.6" stroke-opacity="0.7" stroke-linejoin="round"/>
<line x1="838.0" y1="750.0" x2="862.0" y2="738.0" stroke="#5a1512" stroke-width="0.6" stroke-opacity="0.5"/>
<line x1="800.0" y1="897.0" x2="864.0" y2="860.0" stroke="#6a5c51" stroke-width="14" stroke-opacity="0.6"/>
<polygon points="856.0,842.0 866.0,830.0 884.0,830.0 893.0,842.0 893.0,884.0 884.0,890.0 862.0,888.0 856.0,880.0" fill="#e4635b" fill-opacity="0.85" stroke="#7a2a25" stroke-width="0.6" stroke-opacity="0.6" stroke-linejoin="round"/>
<line x1="606.0" y1="882.0" x2="662.0" y2="858.0" stroke="#6a5c51" stroke-width="9" stroke-opacity="0.6"/>
<polygon points="679.6,858.4 670.4,867.6 657.8,864.2 654.4,851.6 663.6,842.4 676.2,845.8" fill="#d9573f" fill-opacity="0.85" stroke="#3a2a2a" stroke-width="0.6" stroke-opacity="0.7" stroke-linejoin="round"/>
<polygon points="725.6,941.1 716.4,957.6 703.8,951.5 700.4,928.9 709.6,912.4 722.2,918.5" fill="#d9573f" fill-opacity="0.7" stroke="#3a2a2a" stroke-width="0.6" stroke-opacity="0.7" stroke-linejoin="round"/>
<line x1="742.0" y1="857.0" x2="766.0" y2="892.0" stroke="#c9b94a" stroke-width="5" stroke-opacity="0.6"/>
<polygon points="736.0,902.0 780.0,891.0 790.0,905.0 745.0,915.0" fill="#e6e0da" fill-opacity="0.9"/>
<polygon points="1163.0,425.0 1173.0,424.0 1173.5,439.0 1163.5,440.0" fill="#e8e4e0" stroke="#666" stroke-width="0.5" stroke-linejoin="round"/>
<line x1="1167.5" y1="440.0" x2="1166.0" y2="468.0" stroke="#5f5147" stroke-width="7" stroke-opacity="0.85"/>
<polygon points="1172.5,470.5 1168.2,476.4 1159.8,476.4 1155.5,470.5 1159.8,464.6 1168.2,464.6" fill="#e8403a" stroke="#3a2a2a" stroke-width="0.6" stroke-opacity="0.7" stroke-linejoin="round"/>
<ellipse cx="1196.5" cy="434.0" rx="2.2" ry="5.5" transform="rotate(92.1 1196.5 434.0)" fill="#d8c94a" stroke="#6f651c" stroke-width="0.5"/>
<polygon points="1191.0,433.8 1189.5,473.8 1200.5,474.2 1202.0,434.2" fill="#d8c94a"/>
<line x1="1191.0" y1="433.8" x2="1189.5" y2="473.8" stroke="#6f651c" stroke-width="0.5" stroke-opacity="0.9"/>
<line x1="1202.0" y1="434.2" x2="1200.5" y2="474.2" stroke="#6f651c" stroke-width="0.5" stroke-opacity="0.9"/>
<line x1="1196.5" y1="434.0" x2="1195.0" y2="474.0" stroke="#6f651c" stroke-width="0.5" stroke-opacity="0.55"/>
<ellipse cx="1195.0" cy="474.0" rx="2.2" ry="5.5" transform="rotate(92.1 1195.0 474.0)" fill="#d8c94a" stroke="#6f651c" stroke-width="0.5"/>
<line x1="1135.0" y1="552.0" x2="1160.0" y2="545.0" stroke="#5f5147" stroke-width="7" stroke-opacity="0.8"/>
<ellipse cx="1134.0" cy="551.5" rx="3.6" ry="8.0" transform="rotate(162.3 1134.0 551.5)" fill="#dd5a4c" stroke="#7a2a25" stroke-width="0.5"/>
<polygon points="1131.6,543.9 1120.6,547.4 1125.4,562.6 1136.4,559.1" fill="#dd5a4c"/>
<line x1="1131.6" y1="543.9" x2="1120.6" y2="547.4" stroke="#7a2a25" stroke-width="0.5" stroke-opacity="0.9"/>
<line x1="1136.4" y1="559.1" x2="1125.4" y2="562.6" stroke="#7a2a25" stroke-width="0.5" stroke-opacity="0.9"/>
<line x1="1135.0" y1="554.5" x2="1124.0" y2="558.0" stroke="#7a2a25" stroke-width="0.5" stroke-opacity="0.55"/>
<line x1="1133.0" y1="548.5" x2="1122.0" y2="552.0" stroke="#7a2a25" stroke-width="0.5" stroke-opacity="0.55"/>
<ellipse cx="1123.0" cy="555.0" rx="3.6" ry="8.0" transform="rotate(162.3 1123.0 555.0)" fill="#dd5a4c" stroke="#7a2a25" stroke-width="0.5"/>
<line x1="1128.0" y1="646.0" x2="1152.0" y2="638.0" stroke="#5f5147" stroke-width="7" stroke-opacity="0.8"/>
<ellipse cx="1127.0" cy="645.0" rx="3.6" ry="8.0" transform="rotate(160.0 1127.0 645.0)" fill="#dd5a4c" fill-opacity="0.95" stroke="#7a2a25" stroke-width="0.5"/>
<polygon points="1124.3,637.5 1113.3,641.5 1118.7,656.5 1129.7,652.5" fill="#dd5a4c" fill-opacity="0.95"/>
<line x1="1124.3" y1="637.5" x2="1113.3" y2="641.5" stroke="#7a2a25" stroke-width="0.5" stroke-opacity="0.9"/>
<line x1="1129.7" y1="652.5" x2="1118.7" y2="656.5" stroke="#7a2a25" stroke-width="0.5" stroke-opacity="0.9"/>
<line x1="1128.1" y1="648.0" x2="1117.1" y2="652.0" stroke="#7a2a25" stroke-width="0.5" stroke-opacity="0.55"/>
<line x1="1125.9" y1="642.0" x2="1114.9" y2="646.0" stroke="#7a2a25" stroke-width="0.5" stroke-opacity="0.55"/>
<ellipse cx="1116.0" cy="649.0" rx="3.6" ry="8.0" transform="rotate(160.0 1116.0 649.0)" fill="#dd5a4c" fill-opacity="0.95" stroke="#7a2a25" stroke-width="0.5"/>
<polygon points="1476.0,514.0 1491.0,517.0 1489.0,533.0 1474.0,530.0" fill="#e8e4e0" stroke="#666" stroke-width="0.5" stroke-linejoin="round"/>
<line x1="1482.0" y1="532.0" x2="1477.0" y2="566.0" stroke="#5f5147" stroke-width="9" stroke-opacity="0.75"/>
<polygon points="1485.0,575.0 1479.0,582.5 1467.0,582.5 1461.0,575.0 1467.0,567.5 1479.0,567.5" fill="#f03c3c" stroke="#3a2a2a" stroke-width="0.6" stroke-opacity="0.7" stroke-linejoin="round"/>
<line x1="1466.0" y1="650.0" x2="1482.0" y2="630.0" stroke="#4f443c" stroke-width="7" stroke-opacity="0.85"/>
<polygon points="1478.0,624.0 1488.0,628.0 1485.0,637.0 1476.0,634.0" fill="#e8e4e0" stroke="#666" stroke-width="0.5" stroke-linejoin="round"/>
<ellipse cx="1450.0" cy="646.0" rx="3.8" ry="9.5" transform="rotate(16.7 1450.0 646.0)" fill="#f04a46" stroke="#7a2a25" stroke-width="0.5"/>
<polygon points="1447.3,655.1 1467.3,661.1 1472.7,642.9 1452.7,636.9" fill="#f04a46"/>
<line x1="1447.3" y1="655.1" x2="1467.3" y2="661.1" stroke="#7a2a25" stroke-width="0.5" stroke-opacity="0.9"/>
<line x1="1452.7" y1="636.9" x2="1472.7" y2="642.9" stroke="#7a2a25" stroke-width="0.5" stroke-opacity="0.9"/>
<line x1="1451.1" y1="642.4" x2="1471.1" y2="648.4" stroke="#7a2a25" stroke-width="0.5" stroke-opacity="0.55"/>
<line x1="1448.9" y1="649.6" x2="1468.9" y2="655.6" stroke="#7a2a25" stroke-width="0.5" stroke-opacity="0.55"/>
<ellipse cx="1470.0" cy="652.0" rx="3.8" ry="9.5" transform="rotate(16.7 1470.0 652.0)" fill="#f04a46" stroke="#7a2a25" stroke-width="0.5"/>
<ellipse cx="1095.0" cy="690.0" rx="1.8" ry="4.5" transform="rotate(25.8 1095.0 690.0)" fill="#d8c94a" fill-opacity="0.85" stroke="#6f651c" stroke-width="0.5"/>
<polygon points="1093.0,694.1 1122.0,708.1 1126.0,699.9 1097.0,685.9" fill="#d8c94a" fill-opacity="0.85"/>
<line x1="1093.0" y1="694.1" x2="1122.0" y2="708.1" stroke="#6f651c" stroke-width="0.5" stroke-opacity="0.9"/>
<line x1="1097.0" y1="685.9" x2="1126.0" y2="699.9" stroke="#6f651c" stroke-width="0.5" stroke-opacity="0.9"/>
<line x1="1095.0" y1="690.0" x2="1124.0" y2="704.0" stroke="#6f651c" stroke-width="0.5" stroke-opacity="0.55"/>
<ellipse cx="1124.0" cy="704.0" rx="1.8" ry="4.5" transform="rotate(25.8 1124.0 704.0)" fill="#d8c94a" fill-opacity="0.85" stroke="#6f651c" stroke-width="0.5"/>
<ellipse cx="1204.0" cy="706.0" rx="1.8" ry="4.5" transform="rotate(-24.4 1204.0 706.0)" fill="#d8c94a" fill-opacity="0.8" stroke="#6f651c" stroke-width="0.5"/>
<polygon points="1205.9,710.1 1227.9,700.1 1224.1,691.9 1202.1,701.9" fill="#d8c94a" fill-opacity="0.8"/>
<line x1="1205.9" y1="710.1" x2="1227.9" y2="700.1" stroke="#6f651c" stroke-width="0.5" stroke-opacity="0.9"/>
<line x1="1202.1" y1="701.9" x2="1224.1" y2="691.9" stroke="#6f651c" stroke-width="0.5" stroke-opacity="0.9"/>
<line x1="1204.0" y1="706.0" x2="1226.0" y2="696.0" stroke="#6f651c" stroke-width="0.5" stroke-opacity="0.55"/>
<ellipse cx="1226.0" cy="696.0" rx="1.8" ry="4.5" transform="rotate(-24.4 1226.0 696.0)" fill="#d8c94a" fill-opacity="0.8" stroke="#6f651c" stroke-width="0.5"/>
<line x1="1177.0" y1="656.0" x2="1176.0" y2="684.0" stroke="#d8c94a" stroke-width="5" stroke-opacity="0.7"/>
<line x1="1110.0" y1="690.0" x2="1180.0" y2="702.0" stroke="#5f5147" stroke-width="6" stroke-opacity="0.6"/>
<ellipse cx="1146.0" cy="691.0" rx="2.6" ry="6.5" transform="rotate(85.9 1146.0 691.0)" fill="#dd5a4c" fill-opacity="0.95" stroke="#7a2a25" stroke-width="0.5"/>
<polygon points="1139.5,691.5 1140.5,705.5 1153.5,704.5 1152.5,690.5" fill="#dd5a4c" fill-opacity="0.95"/>
<line x1="1139.5" y1="691.5" x2="1140.5" y2="705.5" stroke="#7a2a25" stroke-width="0.5" stroke-opacity="0.9"/>
<line x1="1152.5" y1="690.5" x2="1153.5" y2="704.5" stroke="#7a2a25" stroke-width="0.5" stroke-opacity="0.9"/>
<line x1="1146.0" y1="691.0" x2="1147.0" y2="705.0" stroke="#7a2a25" stroke-width="0.5" stroke-opacity="0.55"/>
<ellipse cx="1147.0" cy="705.0" rx="2.6" ry="6.5" transform="rotate(85.9 1147.0 705.0)" fill="#dd5a4c" fill-opacity="0.95" stroke="#7a2a25" stroke-width="0.5"/>
<ellipse cx="1171.0" cy="692.0" rx="2.6" ry="6.5" transform="rotate(86.2 1171.0 692.0)" fill="#dd5a4c" fill-opacity="0.9" stroke="#7a2a25" stroke-width="0.5"/>
<polygon points="1164.5,692.4 1165.5,707.4 1178.5,706.6 1177.5,691.6" fill="#dd5a4c" fill-opacity="0.9"/>
<line x1="1164.5" y1="692.4" x2="1165.5" y2="707.4" stroke="#7a2a25" stroke-width="0.5" stroke-opacity="0.9"/>
<line x1="1177.5" y1="691.6" x2="1178.5" y2="706.6" stroke="#7a2a25" stroke-width="0.5" stroke-opacity="0.9"/>
<line x1="1171.0" y1="692.0" x2="1172.0" y2="707.0" stroke="#7a2a25" stroke-width="0.5" stroke-opacity="0.55"/>
<ellipse cx="1172.0" cy="707.0" rx="2.6" ry="6.5" transform="rotate(86.2 1172.0 707.0)" fill="#dd5a4c" fill-opacity="0.9" stroke="#7a2a25" stroke-width="0.5"/>
<ellipse cx="1310.0" cy="752.0" rx="2.0" ry="5.0" transform="rotate(-34.3 1310.0 752.0)" fill="#d8c94a" fill-opacity="0.85" stroke="#6f651c" stroke-width="0.5"/>
<polygon points="1312.8,756.1 1334.8,741.1 1329.2,732.9 1307.2,747.9" fill="#d8c94a" fill-opacity="0.85"/>
<line x1="1312.8" y1="756.1" x2="1334.8" y2="741.1" stroke="#6f651c" stroke-width="0.5" stroke-opacity="0.9"/>
<line x1="1307.2" y1="747.9" x2="1329.2" y2="732.9" stroke="#6f651c" stroke-width="0.5" stroke-opacity="0.9"/>
<line x1="1310.0" y1="752.0" x2="1332.0" y2="737.0" stroke="#6f651c" stroke-width="0.5" stroke-opacity="0.55"/>
<ellipse cx="1332.0" cy="737.0" rx="2.0" ry="5.0" transform="rotate(-34.3 1332.0 737.0)" fill="#d8c94a" fill-opacity="0.85" stroke="#6f651c" stroke-width="0.5"/>
<ellipse cx="1368.0" cy="728.0" rx="2.0" ry="5.0" transform="rotate(92.0 1368.0 728.0)" fill="#d8c94a" fill-opacity="0.8" stroke="#6f651c" stroke-width="0.5"/>
<polygon points="1363.0,727.8 1362.0,756.8 1372.0,757.2 1373.0,728.2" fill="#d8c94a" fill-opacity="0.8"/>
<line x1="1363.0" y1="727.8" x2="1362.0" y2="756.8" stroke="#6f651c" stroke-width="0.5" stroke-opacity="0.9"/>
<line x1="1373.0" y1="728.2" x2="1372.0" y2="757.2" stroke="#6f651c" stroke-width="0.5" stroke-opacity="0.9"/>
<line x1="1368.0" y1="728.0" x2="1367.0" y2="757.0" stroke="#6f651c" stroke-width="0.5" stroke-opacity="0.55"/>
<ellipse cx="1367.0" cy="757.0" rx="2.0" ry="5.0" transform="rotate(92.0 1367.0 757.0)" fill="#d8c94a" fill-opacity="0.8" stroke="#6f651c" stroke-width="0.5"/>
<line x1="1406.0" y1="750.0" x2="1401.0" y2="786.0" stroke="#8a7d72" stroke-width="7" stroke-opacity="0.6"/>
<polygon points="1415.5,742.0 1411.0,748.6 1402.0,748.6 1397.5,742.0 1402.0,735.4 1411.0,735.4" fill="#dd5a4c" fill-opacity="0.95" stroke="#3a2a2a" stroke-width="0.6" stroke-opacity="0.7" stroke-linejoin="round"/>
<line x1="1358.0" y1="770.0" x2="1378.0" y2="752.0" stroke="#4f443c" stroke-width="7" stroke-opacity="0.85"/>
<polygon points="1372.0,746.0 1384.0,748.0 1382.0,758.0 1371.0,756.0" fill="#e8e4e0" stroke="#666" stroke-width="0.5" stroke-linejoin="round"/>
<ellipse cx="1352.0" cy="766.0" rx="4.0" ry="9.0" transform="rotate(94.1 1352.0 766.0)" fill="#dd5a4c" stroke="#7a2a25" stroke-width="0.5"/>
<polygon points="1343.0,765.4 1342.0,779.4 1360.0,780.6 1361.0,766.6" fill="#dd5a4c"/>
<line x1="1343.0" y1="765.4" x2="1342.0" y2="779.4" stroke="#7a2a25" stroke-width="0.5" stroke-opacity="0.9"/>
<line x1="1361.0" y1="766.6" x2="1360.0" y2="780.6" stroke="#7a2a25" stroke-width="0.5" stroke-opacity="0.9"/>
<line x1="1355.6" y1="766.3" x2="1354.6" y2="780.3" stroke="#7a2a25" stroke-width="0.5" stroke-opacity="0.55"/>
<line x1="1348.4" y1="765.7" x2="1347.4" y2="779.7" stroke="#7a2a25" stroke-width="0.5" stroke-opacity="0.55"/>
<ellipse cx="1351.0" cy="780.0" rx="4.0" ry="9.0" transform="rotate(94.1 1351.0 780.0)" fill="#dd5a4c" stroke="#7a2a25" stroke-width="0.5"/>
<line x1="1372.0" y1="792.0" x2="1408.0" y2="808.0" stroke="#4f443c" stroke-width="7" stroke-opacity="0.85"/>
<ellipse cx="1362.0" cy="781.0" rx="4.0" ry="9.0" transform="rotate(93.4 1362.0 781.0)" fill="#dd5a4c" stroke="#7a2a25" stroke-width="0.5"/>
<polygon points="1353.0,780.5 1352.0,797.5 1370.0,798.5 1371.0,781.5" fill="#dd5a4c"/>
<line x1="1353.0" y1="780.5" x2="1352.0" y2="797.5" stroke="#7a2a25" stroke-width="0.5" stroke-opacity="0.9"/>
<line x1="1371.0" y1="781.5" x2="1370.0" y2="798.5" stroke="#7a2a25" stroke-width="0.5" stroke-opacity="0.9"/>
<line x1="1365.6" y1="781.2" x2="1364.6" y2="798.2" stroke="#7a2a25" stroke-width="0.5" stroke-opacity="0.55"/>
<line x1="1358.4" y1="780.8" x2="1357.4" y2="797.8" stroke="#7a2a25" stroke-width="0.5" stroke-opacity="0.55"/>
<ellipse cx="1361.0" cy="798.0" rx="4.0" ry="9.0" transform="rotate(93.4 1361.0 798.0)" fill="#dd5a4c" stroke="#7a2a25" stroke-width="0.5"/>
<ellipse cx="1406.0" cy="806.0" rx="3.0" ry="7.5" transform="rotate(26.6 1406.0 806.0)" fill="#e8e4e0" stroke="#666" stroke-width="0.5"/>
<polygon points="1402.6,812.7 1420.6,821.7 1427.4,808.3 1409.4,799.3" fill="#e8e4e0"/>
<line x1="1402.6" y1="812.7" x2="1420.6" y2="821.7" stroke="#666" stroke-width="0.5" stroke-opacity="0.9"/>
<line x1="1409.4" y1="799.3" x2="1427.4" y2="808.3" stroke="#666" stroke-width="0.5" stroke-opacity="0.9"/>
<line x1="1406.0" y1="806.0" x2="1424.0" y2="815.0" stroke="#666" stroke-width="0.5" stroke-opacity="0.55"/>
<ellipse cx="1424.0" cy="815.0" rx="3.0" ry="7.5" transform="rotate(26.6 1424.0 815.0)" fill="#e8e4e0" stroke="#666" stroke-width="0.5"/>
<line x1="1442.0" y1="768.0" x2="1456.0" y2="752.0" stroke="#4f443c" stroke-width="7" stroke-opacity="0.85"/>
<polygon points="1448.0,743.0 1461.0,746.0 1459.0,757.0 1447.0,755.0" fill="#e8e4e0" stroke="#666" stroke-width="0.5" stroke-linejoin="round"/>
<ellipse cx="1430.0" cy="768.0" rx="3.8" ry="9.5" transform="rotate(24.0 1430.0 768.0)" fill="#f04a46" stroke="#7a2a25" stroke-width="0.5"/>
<polygon points="1426.1,776.7 1444.1,784.7 1451.9,767.3 1433.9,759.3" fill="#f04a46"/>
<line x1="1426.1" y1="776.7" x2="1444.1" y2="784.7" stroke="#7a2a25" stroke-width="0.5" stroke-opacity="0.9"/>
<line x1="1433.9" y1="759.3" x2="1451.9" y2="767.3" stroke="#7a2a25" stroke-width="0.5" stroke-opacity="0.9"/>
<line x1="1431.5" y1="764.5" x2="1449.5" y2="772.5" stroke="#7a2a25" stroke-width="0.5" stroke-opacity="0.55"/>
<line x1="1428.5" y1="771.5" x2="1446.5" y2="779.5" stroke="#7a2a25" stroke-width="0.5" stroke-opacity="0.55"/>
<ellipse cx="1448.0" cy="776.0" rx="3.8" ry="9.5" transform="rotate(24.0 1448.0 776.0)" fill="#f04a46" stroke="#7a2a25" stroke-width="0.5"/>
<ellipse cx="1347.0" cy="806.0" rx="2.4" ry="6.0" transform="rotate(25.3 1347.0 806.0)" fill="#d8c94a" fill-opacity="0.9" stroke="#6f651c" stroke-width="0.5"/>
<polygon points="1344.4,811.4 1401.4,838.4 1406.6,827.6 1349.6,800.6" fill="#d8c94a" fill-opacity="0.9"/>
<line x1="1344.4" y1="811.4" x2="1401.4" y2="838.4" stroke="#6f651c" stroke-width="0.5" stroke-opacity="0.9"/>
<line x1="1349.6" y1="800.6" x2="1406.6" y2="827.6" stroke="#6f651c" stroke-width="0.5" stroke-opacity="0.9"/>
<line x1="1347.0" y1="806.0" x2="1404.0" y2="833.0" stroke="#6f651c" stroke-width="0.5" stroke-opacity="0.55"/>
<ellipse cx="1404.0" cy="833.0" rx="2.4" ry="6.0" transform="rotate(25.3 1404.0 833.0)" fill="#d8c94a" fill-opacity="0.9" stroke="#6f651c" stroke-width="0.5"/>
<ellipse cx="1527.0" cy="591.0" rx="2.4" ry="6.0" transform="rotate(90.0 1527.0 591.0)" fill="#dd5a4c" fill-opacity="0.9" stroke="#7a2a25" stroke-width="0.4"/>
<polygon points="1521.0,591.0 1521.0,603.0 1533.0,603.0 1533.0,591.0" fill="#dd5a4c" fill-opacity="0.9"/>
<line x1="1521.0" y1="591.0" x2="1521.0" y2="603.0" stroke="#7a2a25" stroke-width="0.4" stroke-opacity="0.9"/>
<line x1="1533.0" y1="591.0" x2="1533.0" y2="603.0" stroke="#7a2a25" stroke-width="0.4" stroke-opacity="0.9"/>
<line x1="1527.0" y1="591.0" x2="1527.0" y2="603.0" stroke="#7a2a25" stroke-width="0.5" stroke-opacity="0.55"/>
<ellipse cx="1527.0" cy="603.0" rx="2.4" ry="6.0" transform="rotate(90.0 1527.0 603.0)" fill="#dd5a4c" fill-opacity="0.9" stroke="#7a2a25" stroke-width="0.4"/>
<ellipse cx="1548.0" cy="594.0" rx="2.4" ry="6.0" transform="rotate(90.0 1548.0 594.0)" fill="#dd5a4c" fill-opacity="0.9" stroke="#7a2a25" stroke-width="0.4"/>
<polygon points="1542.0,594.0 1542.0,606.0 1554.0,606.0 1554.0,594.0" fill="#dd5a4c" fill-opacity="0.9"/>
<line x1="1542.0" y1="594.0" x2="1542.0" y2="606.0" stroke="#7a2a25" stroke-width="0.4" stroke-opacity="0.9"/>
<line x1="1554.0" y1="594.0" x2="1554.0" y2="606.0" stroke="#7a2a25" stroke-width="0.4" stroke-opacity="0.9"/>
<line x1="1548.0" y1="594.0" x2="1548.0" y2="606.0" stroke="#7a2a25" stroke-width="0.5" stroke-opacity="0.55"/>
<ellipse cx="1548.0" cy="606.0" rx="2.4" ry="6.0" transform="rotate(90.0 1548.0 606.0)" fill="#dd5a4c" fill-opacity="0.9" stroke="#7a2a25" stroke-width="0.4"/>
<ellipse cx="1570.0" cy="597.0" rx="2.4" ry="6.0" transform="rotate(90.0 1570.0 597.0)" fill="#dd5a4c" fill-opacity="0.9" stroke="#7a2a25" stroke-width="0.4"/>
<polygon points="1564.0,597.0 1564.0,609.0 1576.0,609.0 1576.0,597.0" fill="#dd5a4c" fill-opacity="0.9"/>
<line x1="1564.0" y1="597.0" x2="1564.0" y2="609.0" stroke="#7a2a25" stroke-width="0.4" stroke-opacity="0.9"/>
<line x1="1576.0" y1="597.0" x2="1576.0" y2="609.0" stroke="#7a2a25" stroke-width="0.4" stroke-opacity="0.9"/>
<line x1="1570.0" y1="597.0" x2="1570.0" y2="609.0" stroke="#7a2a25" stroke-width="0.5" stroke-opacity="0.55"/>
<ellipse cx="1570.0" cy="609.0" rx="2.4" ry="6.0" transform="rotate(90.0 1570.0 609.0)" fill="#dd5a4c" fill-opacity="0.9" stroke="#7a2a25" stroke-width="0.4"/>
<ellipse cx="1558.0" cy="616.0" rx="2.4" ry="6.0" transform="rotate(90.0 1558.0 616.0)" fill="#dd5a4c" fill-opacity="0.9" stroke="#7a2a25" stroke-width="0.4"/>
<polygon points="1552.0,616.0 1552.0,628.0 1564.0,628.0 1564.0,616.0" fill="#dd5a4c" fill-opacity="0.9"/>
<line x1="1552.0" y1="616.0" x2="1552.0" y2="628.0" stroke="#7a2a25" stroke-width="0.4" stroke-opacity="0.9"/>
<line x1="1564.0" y1="616.0" x2="1564.0" y2="628.0" stroke="#7a2a25" stroke-width="0.4" stroke-opacity="0.9"/>
<line x1="1558.0" y1="616.0" x2="1558.0" y2="628.0" stroke="#7a2a25" stroke-width="0.5" stroke-opacity="0.55"/>
<ellipse cx="1558.0" cy="628.0" rx="2.4" ry="6.0" transform="rotate(90.0 1558.0 628.0)" fill="#dd5a4c" fill-opacity="0.9" stroke="#7a2a25" stroke-width="0.4"/>
<line x1="1560.0" y1="607.0" x2="1591.0" y2="612.0" stroke="#d8c94a" stroke-width="6" stroke-opacity="0.8"/>
<line x1="1522.0" y1="615.0" x2="1540.0" y2="606.0" stroke="#d8c94a" stroke-width="4" stroke-opacity="0.7"/>
<line x1="1575.0" y1="600.0" x2="1591.0" y2="603.0" stroke="#4f443c" stroke-width="7" stroke-opacity="0.7"/>
<ellipse cx="1497.0" cy="706.0" rx="3.2" ry="8.0" transform="rotate(28.6 1497.0 706.0)" fill="#dd5a4c" fill-opacity="0.9" stroke="#7a2a25" stroke-width="0.4"/>
<polygon points="1493.2,713.0 1504.2,719.0 1511.8,705.0 1500.8,699.0" fill="#dd5a4c" fill-opacity="0.9"/>
<line x1="1493.2" y1="713.0" x2="1504.2" y2="719.0" stroke="#7a2a25" stroke-width="0.4" stroke-opacity="0.9"/>
<line x1="1500.8" y1="699.0" x2="1511.8" y2="705.0" stroke="#7a2a25" stroke-width="0.4" stroke-opacity="0.9"/>
<line x1="1497.0" y1="706.0" x2="1508.0" y2="712.0" stroke="#7a2a25" stroke-width="0.5" stroke-opacity="0.55"/>
<ellipse cx="1508.0" cy="712.0" rx="3.2" ry="8.0" transform="rotate(28.6 1508.0 712.0)" fill="#dd5a4c" fill-opacity="0.9" stroke="#7a2a25" stroke-width="0.4"/>
<line x1="1494.0" y1="722.0" x2="1510.0" y2="725.0" stroke="#d8c94a" stroke-width="4" stroke-opacity="0.7"/>
<polygon points="1594.0,729.0 1590.0,735.9 1582.0,735.9 1578.0,729.0 1582.0,722.1 1590.0,722.1" fill="#dd5a4c" fill-opacity="0.5" stroke="#3a2a2a" stroke-width="0.6" stroke-opacity="0.7" stroke-linejoin="round"/>
<polygon points="1038.0,790.0 1034.0,796.9 1026.0,796.9 1022.0,790.0 1026.0,783.1 1034.0,783.1" fill="#d98a7e" fill-opacity="0.7" stroke="#3a2a2a" stroke-width="0.6" stroke-opacity="0.7" stroke-linejoin="round"/>
<polygon points="1046.0,806.0 1042.0,812.9 1034.0,812.9 1030.0,806.0 1034.0,799.1 1042.0,799.1" fill="#d98a7e" fill-opacity="0.7" stroke="#3a2a2a" stroke-width="0.6" stroke-opacity="0.7" stroke-linejoin="round"/>
<line x1="1000.0" y1="788.0" x2="1026.0" y2="795.0" stroke="#8a7d72" stroke-width="8" stroke-opacity="0.4"/>
<polyline points="1012.0,770.0 1046.0,760.0 1050.0,810.0" fill="none" stroke="#333" stroke-width="0.6" stroke-opacity="0.35" stroke-linejoin="round"/>
<polygon points="1285.0,930.0 1280.0,940.4 1270.0,940.4 1265.0,930.0 1270.0,919.6 1280.0,919.6" fill="#df7a70" fill-opacity="0.8" stroke="#3a2a2a" stroke-width="0.6" stroke-opacity="0.7" stroke-linejoin="round"/>
<polygon points="1280.0,952.0 1275.0,962.4 1265.0,962.4 1260.0,952.0 1265.0,941.6 1275.0,941.6" fill="#df7a70" fill-opacity="0.8" stroke="#3a2a2a" stroke-width="0.6" stroke-opacity="0.7" stroke-linejoin="round"/>
<line x1="1285.0" y1="945.0" x2="1330.0" y2="958.0" stroke="#8a7d72" stroke-width="10" stroke-opacity="0.45"/>
<line x1="1372.0" y1="520.0" x2="1369.0" y2="585.0" stroke="#7a6a9a" stroke-width="3" stroke-opacity="0.5"/>
<polyline points="437.0,512.3 758.2,838.4" fill="none" stroke="#000" stroke-width="1.5" stroke-linejoin="round"/>
<line x1="439.5" y1="516.5" x2="756.5" y2="842.0" stroke="#000" stroke-width="1" stroke-opacity="0.85"/>
<polyline points="487.9,529.0 805.0,810.0" fill="none" stroke="#000" stroke-width="1.4" stroke-linejoin="round"/>
<line x1="805.0" y1="810.0" x2="1591.0" y2="439.1" stroke="#000" stroke-width="1.7" stroke-opacity="0.95"/>
<line x1="808.3" y1="882.8" x2="1591.0" y2="459.6" stroke="#000" stroke-width="1.9" stroke-opacity="0.95"/>
<line x1="805.0" y1="810.0" x2="808.3" y2="882.8" stroke="#000" stroke-width="1.2"/>
<line x1="758.2" y1="838.4" x2="808.3" y2="882.8" stroke="#000" stroke-width="1.7"/>
</g>
<line x1="433.7" y1="481.0" x2="1591.0" y2="335.6" stroke="#000" stroke-width="1.6"/>
<line x1="437.0" y1="512.3" x2="511.0" y2="967.0" stroke="#000" stroke-width="1.7"/>
<line x1="433.7" y1="481.0" x2="437.0" y2="512.3" stroke="#000" stroke-width="1.3"/>
<line x1="1591.0" y1="703.0" x2="1386.0" y2="967.0" stroke="#000" stroke-width="2.4"/>
<line x1="1591.0" y1="728.0" x2="1422.0" y2="967.0" stroke="#000" stroke-width="1.3"/>
<rect x="363" y="417.5" width="537" height="472" rx="3" fill="none" stroke="#ea1f2d" stroke-width="3"/>
<circle cx="471" cy="288" r="2.5" fill="#b3e81a"/>
<polygon points="468.5,288.2 481.9,523.3 489.9,522.8 473.5,287.8" fill="#b3e81a"/>
<polygon points="487.0,541.0 475.1,518.7 485.9,523.1 496.0,517.4" fill="#b3e81a"/>
<circle cx="820" cy="343" r="2.5" fill="#b3e81a"/>
<polygon points="817.7,342.1 675.9,692.9 683.4,695.8 822.3,343.9" fill="#b3e81a"/>
<polygon points="673.0,711.0 671.8,685.7 679.7,694.3 691.3,693.5" fill="#b3e81a"/>
<circle cx="1042" cy="866" r="2.5" fill="#b3e81a"/>
<polygon points="1042.2,863.5 793.2,837.8 792.5,845.7 1041.8,868.5" fill="#b3e81a"/>
<polygon points="775.0,840.0 798.9,831.8 792.9,841.7 796.9,852.7" fill="#b3e81a"/>
<rect x="723.5" y="806.5" width="57" height="54" rx="2" fill="none" stroke="#b3e81a" stroke-width="3"/>
</svg>
<!--/SCENE-->
  <div id="ts">2024-11-05 10:53:13</div>
  <div id="lst">
<!--ROWS-->
    <div class="row" style="top:-2px"><i></i><u></u><s>80踢脚线<svg viewBox="0 0 16 16"><path d="M1.100 8.400C2.900 5 5.300 3.500 8 3.500S13.100 5 14.900 8.400C13.100 11.800 10.700 13.300 8 13.300S2.900 11.800 1.100 8.400Z" fill="none" stroke="#1f1f1f" stroke-width="1.500"/><circle cx="8" cy="8.400" r="2.300" fill="none" stroke="#1f1f1f" stroke-width="1.500"/></svg></s></div>
    <div class="row" style="top:26px"><i></i><u></u><s>1单列吊柜<svg viewBox="0 0 16 16"><path d="M1.100 8.400C2.900 5 5.300 3.500 8 3.500S13.100 5 14.900 8.400C13.100 11.800 10.700 13.300 8 13.300S2.900 11.800 1.100 8.400Z" fill="none" stroke="#1f1f1f" stroke-width="1.500"/><circle cx="8" cy="8.400" r="2.300" fill="none" stroke="#1f1f1f" stroke-width="1.500"/></svg></s></div>
    <div class="row" style="top:54px"><i></i><u></u><s>1左见光板<svg viewBox="0 0 16 16"><path d="M1.100 8.400C2.900 5 5.300 3.500 8 3.500S13.100 5 14.900 8.400C13.100 11.800 10.700 13.300 8 13.300S2.900 11.800 1.100 8.400Z" fill="none" stroke="#1f1f1f" stroke-width="1.500"/><circle cx="8" cy="8.400" r="2.300" fill="none" stroke="#1f1f1f" stroke-width="1.500"/></svg></s></div>
    <div class="row" style="top:82px"><i></i><u></u><s>2右见光板<svg viewBox="0 0 16 16"><path d="M1.100 8.400C2.900 5 5.300 3.500 8 3.500S13.100 5 14.900 8.400C13.100 11.800 10.700 13.300 8 13.300S2.900 11.800 1.100 8.400Z" fill="none" stroke="#1f1f1f" stroke-width="1.500"/><circle cx="8" cy="8.400" r="2.300" fill="none" stroke="#1f1f1f" stroke-width="1.500"/></svg></s></div>
    <div class="row" style="top:110px"><i></i><u></u><s>台面<svg viewBox="0 0 16 16"><path d="M1.100 8.400C2.900 5 5.300 3.500 8 3.500S13.100 5 14.900 8.400C13.100 11.800 10.700 13.300 8 13.300S2.900 11.800 1.100 8.400Z" fill="none" stroke="#1f1f1f" stroke-width="1.500"/><circle cx="8" cy="8.400" r="2.300" fill="none" stroke="#1f1f1f" stroke-width="1.500"/></svg></s></div>
    <div class="row" style="top:138px"><i></i><u></u><s>台面<svg viewBox="0 0 16 16"><path d="M1.100 8.400C2.900 5 5.300 3.500 8 3.500S13.100 5 14.900 8.400C13.100 11.800 10.700 13.300 8 13.300S2.900 11.800 1.100 8.400Z" fill="none" stroke="#1f1f1f" stroke-width="1.500"/><circle cx="8" cy="8.400" r="2.300" fill="none" stroke="#1f1f1f" stroke-width="1.500"/></svg></s></div>
    <div class="row" style="top:166px"><i></i><u></u><s>80踢脚线<svg viewBox="0 0 16 16"><path d="M1.100 8.400C2.900 5 5.300 3.500 8 3.500S13.100 5 14.900 8.400C13.100 11.800 10.700 13.300 8 13.300S2.900 11.800 1.100 8.400Z" fill="none" stroke="#1f1f1f" stroke-width="1.500"/><circle cx="8" cy="8.400" r="2.300" fill="none" stroke="#1f1f1f" stroke-width="1.500"/></svg></s></div>
    <div class="row" style="top:194px"><i></i><u></u><s>2右见光板<svg viewBox="0 0 16 16"><path d="M1.100 8.400C2.900 5 5.300 3.500 8 3.500S13.100 5 14.900 8.400C13.100 11.800 10.700 13.300 8 13.300S2.900 11.800 1.100 8.400Z" fill="none" stroke="#1f1f1f" stroke-width="1.500"/><circle cx="8" cy="8.400" r="2.300" fill="none" stroke="#1f1f1f" stroke-width="1.500"/></svg></s></div>
    <div class="row" style="top:222px"><i></i><u></u><s>1单列吊柜<svg viewBox="0 0 16 16"><path d="M1.100 8.400C2.900 5 5.300 3.500 8 3.500S13.100 5 14.900 8.400C13.100 11.800 10.700 13.300 8 13.300S2.900 11.800 1.100 8.400Z" fill="none" stroke="#1f1f1f" stroke-width="1.500"/><circle cx="8" cy="8.400" r="2.300" fill="none" stroke="#1f1f1f" stroke-width="1.500"/></svg></s></div>
    <div class="row" style="top:250px"><i></i><u></u><s>80踢脚线<svg viewBox="0 0 16 16"><path d="M1.100 8.400C2.900 5 5.300 3.500 8 3.500S13.100 5 14.900 8.400C13.100 11.800 10.700 13.300 8 13.300S2.900 11.800 1.100 8.400Z" fill="none" stroke="#1f1f1f" stroke-width="1.500"/><circle cx="8" cy="8.400" r="2.300" fill="none" stroke="#1f1f1f" stroke-width="1.500"/></svg></s></div>
    <div class="row" style="top:278px"><i></i><u></u><s>顶收口板件【门板】<svg viewBox="0 0 16 16"><path d="M1.100 8.400C2.900 5 5.300 3.500 8 3.500S13.100 5 14.900 8.400C13.100 11.800 10.700 13.300 8 13.300S2.900 11.800 1.100 8.400Z" fill="none" stroke="#1f1f1f" stroke-width="1.500"/><circle cx="8" cy="8.400" r="2.300" fill="none" stroke="#1f1f1f" stroke-width="1.500"/></svg></s></div>
    <div class="row" style="top:306px"><i></i><u></u><s>台面<svg viewBox="0 0 16 16"><path d="M1.100 8.400C2.900 5 5.300 3.500 8 3.500S13.100 5 14.900 8.400C13.100 11.800 10.700 13.300 8 13.300S2.900 11.800 1.100 8.400Z" fill="none" stroke="#1f1f1f" stroke-width="1.500"/><circle cx="8" cy="8.400" r="2.300" fill="none" stroke="#1f1f1f" stroke-width="1.500"/></svg></s></div>
    <div class="row" style="top:334px"><i></i><u></u><s>1左见光板<svg viewBox="0 0 16 16"><path d="M1.100 8.400C2.900 5 5.300 3.500 8 3.500S13.100 5 14.900 8.400C13.100 11.800 10.700 13.300 8 13.300S2.900 11.800 1.100 8.400Z" fill="none" stroke="#1f1f1f" stroke-width="1.500"/><circle cx="8" cy="8.400" r="2.300" fill="none" stroke="#1f1f1f" stroke-width="1.500"/></svg></s></div>
    <div class="row" style="top:362px"><i></i><u></u><s>01榻榻米通用区域<svg viewBox="0 0 16 16"><path d="M1.100 8.400C2.900 5 5.300 3.500 8 3.500S13.100 5 14.900 8.400C13.100 11.800 10.700 13.300 8 13.300S2.900 11.800 1.100 8.400Z" fill="none" stroke="#1f1f1f" stroke-width="1.500"/><circle cx="8" cy="8.400" r="2.300" fill="none" stroke="#1f1f1f" stroke-width="1.500"/></svg></s></div>
    <div class="row" style="top:390px"><i></i><u></u><s>80踢脚线<svg viewBox="0 0 16 16"><path d="M1.100 8.400C2.900 5 5.300 3.500 8 3.500S13.100 5 14.900 8.400C13.100 11.800 10.700 13.300 8 13.300S2.900 11.800 1.100 8.400Z" fill="none" stroke="#1f1f1f" stroke-width="1.500"/><circle cx="8" cy="8.400" r="2.300" fill="none" stroke="#1f1f1f" stroke-width="1.500"/></svg></s></div>
<!--/ROWS-->
  </div>
<!--TOOLBAR-->
  <div class="tb sel" style="left:15px;width:69px">半透<svg viewBox="0 0 12 12"><path d="M0.600 3L6 9.200l5.400-6.200"/></svg></div>
  <div class="tb sel" style="left:85px;width:69px">鸟瞰<svg viewBox="0 0 12 12"><path d="M0.600 3L6 9.200l5.400-6.200"/></svg></div>
  <div class="tb sel" style="left:155px;width:96px">底层模式<svg viewBox="0 0 12 12"><path d="M0.600 3L6 9.200l5.400-6.200"/></svg></div>
  <div class="tb" style="left:254px;width:74px">重置视图</div>
  <div class="tb" style="left:331px;width:52px">门板</div>
  <div class="tb" style="left:387px;width:52px">封边</div>
  <div class="tb" style="left:443px;width:52px">板面</div>
  <div class="tb" style="left:499px;width:72px">冲突检测</div>
  <div class="tb" style="left:575px;width:72px">漏孔检查</div>
  <div class="tb" style="left:651px;width:72px">不生产板</div>
  <div class="tb" style="left:727px;width:72px">无品类板</div>
  <div class="tb g" style="left:803px;width:72px">生成孔槽</div>
  <div class="tb g" style="left:879px;width:72px">解锁柜体</div>
<!--/TOOLBAR-->
</div>

<div id="right">
  <div id="search"><div class="ph">输入编码查找板件</div><div class="btn"></div>
    <svg class="abs" style="left:175px;top:7px" width="16" height="16" viewBox="0 0 16 16"><circle cx="6.600" cy="6.600" r="4.600" fill="none" stroke="#595959" stroke-width="1.400"/><path d="M10 10l4.300 4.300" stroke="#595959" stroke-width="1.500"/></svg>
  </div>
  <div id="col">
    <div class="ch" style="top:0;border-top:none;height:46px"><svg viewBox="0 0 12 12"><path d="M1.500 3.500L6 9l4.500-5.500"/></svg><span>柜体信息</span></div>
    <div id="cc">
      <div class="lb" style="left:15px;top:23px">名称</div>
      <div class="in" style="left:45px;top:17px;width:180px"><em>电视柜组合</em></div>
      <div class="lb" style="left:15px;top:58px">宽</div>
      <div class="in" style="left:30px;top:52px;width:60px"><em>5135.00</em></div>
      <div class="lb" style="left:91px;top:58px">高</div>
      <div class="in" style="left:106px;top:52px;width:60px"><em>2430</em></div>
      <div class="lb" style="left:167px;top:58px">深</div>
      <div class="in" style="left:182px;top:52px;width:60px"><em>400.00</em></div>
      <div class="lb" style="left:15px;top:86px">左</div>
      <div class="bar" style="left:34px;top:88px;background:#0000ff"></div>
      <div class="lb" style="left:113px;top:86px">右</div>
      <div class="bar" style="left:132px;top:88px;background:#ffff00;box-shadow:0 0 0 1px #e9e9c8"></div>
      <div class="lb" style="left:15px;top:108px">前</div>
      <div class="bar" style="left:34px;top:110px;background:#ff0000"></div>
      <div class="lb" style="left:113px;top:108px">后</div>
      <div class="bar" style="left:132px;top:110px;background:#ffa500"></div>
    </div>
    <div class="ch" style="top:193px"><svg viewBox="0 0 12 12"><path d="M3.500 1.500L9 6l-5.500 4.500"/></svg><span>空间列表</span></div>
    <div class="ch" style="top:240px"><svg viewBox="0 0 12 12"><path d="M3.500 1.500L9 6l-5.500 4.500"/></svg><span>材质列表</span></div>
    <div class="ch" style="top:287px"><svg viewBox="0 0 12 12"><path d="M3.500 1.500L9 6l-5.500 4.500"/></svg><span>不生产板件列表</span></div>
    <div class="ch" style="top:334px"><svg viewBox="0 0 12 12"><path d="M3.500 1.500L9 6l-5.500 4.500"/></svg><span>不符合生产板件列表</span></div>
    <div class="ch" style="top:381px"><svg viewBox="0 0 12 12"><path d="M3.500 1.500L9 6l-5.500 4.500"/></svg><span>漏孔板件列表</span></div>
    <div class="ch" style="top:428px"><svg viewBox="0 0 12 12"><path d="M3.500 1.500L9 6l-5.500 4.500"/></svg><span>五金信息</span></div>
  </div>
</div>

<div id="foot"><span>河南吉夫森软件开发有限公司提供技术支持</span></div>
</div>
</body>
</html>
